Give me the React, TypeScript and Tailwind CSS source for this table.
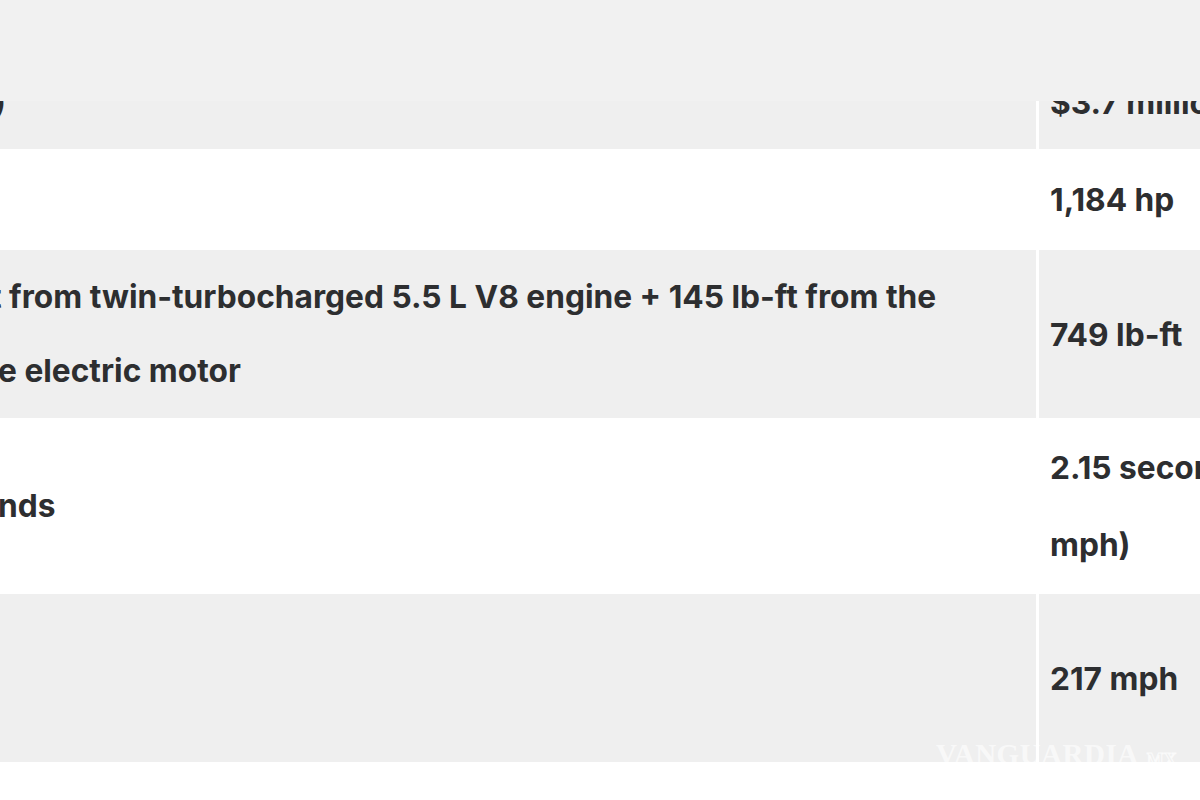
import React from 'react'

interface SpecRow {
  left: { text: string; shift: number }[]
  right: string[]
  height: number
  shaded: boolean
}

const ROWS: SpecRow[] = [
  { left: [{ text: ')', shift: 6 }], right: ['$3.7 millio'], height: 94, shaded: true },
  { left: [], right: ['1,184 hp'], height: 101, shaded: false },
  {
    left: [
      { text: 't from twin-turbocharged 5.5 L V8 engine + 145 lb-ft from the', shift: 10 },
      { text: 'e electric motor', shift: 2 },
    ],
    right: ['749 lb-ft'],
    height: 168,
    shaded: true,
  },
  { left: [{ text: 'nds', shift: 2 }], right: ['2.15 secon', 'mph)'], height: 176, shaded: false },
  { left: [], right: ['217 mph'], height: 168, shaded: true },
]

function Row({ row }: { row: SpecRow }) {
  const bg = row.shaded ? 'bg-[#efefef]' : 'bg-white'
  return (
    <div className="grid grid-cols-[1036px_1fr] gap-x-[3px]" style={{ height: row.height }}>
      <div className={`${bg} flex flex-col justify-center overflow-hidden`}>
        {row.left.map((l, i) => (
          <span key={i} className="block whitespace-nowrap leading-[74px]" style={{ marginLeft: -l.shift }}>
            {l.text}
          </span>
        ))}
      </div>
      <div className={`${bg} flex flex-col justify-center pl-[11px] overflow-hidden`}>
        {row.right.map((r, i) => (
          <span key={i} className="block whitespace-nowrap leading-[77px]">
            {r}
          </span>
        ))}
      </div>
    </div>
  )
}

export default function App() {
  return (
    <div className="relative w-[1200px] h-[800px] overflow-hidden bg-white">
      {/* table, scrolled so the left column starts offscreen */}
      <div
        className="pt-[55px] bg-white text-[31.7px] font-bold text-[#2d2e30]"
        style={{ fontFamily: 'Inter, "Noto Sans", sans-serif' }}
      >
        {ROWS.map((row, i) => (
          <Row key={i} row={row} />
        ))}
      </div>

      {/* sticky header band covering the first row */}
      <div className="absolute top-0 left-0 right-0 h-[101px] bg-[#f1f1f1]" />

      {/* watermark */}
      <div
        className="absolute left-[936px] top-[740px] flex items-end gap-2 text-white/60 select-none"
        style={{ fontFamily: '"Liberation Serif", serif' }}
      >
        <span className="text-[29px] font-bold leading-none tracking-[0.5px]">VANGUARDIA</span>
        <span className="text-[18px] leading-none font-bold text-transparent [-webkit-text-stroke:1px_rgba(255,255,255,0.7)]">
          MX
        </span>
      </div>
    </div>
  )
}
